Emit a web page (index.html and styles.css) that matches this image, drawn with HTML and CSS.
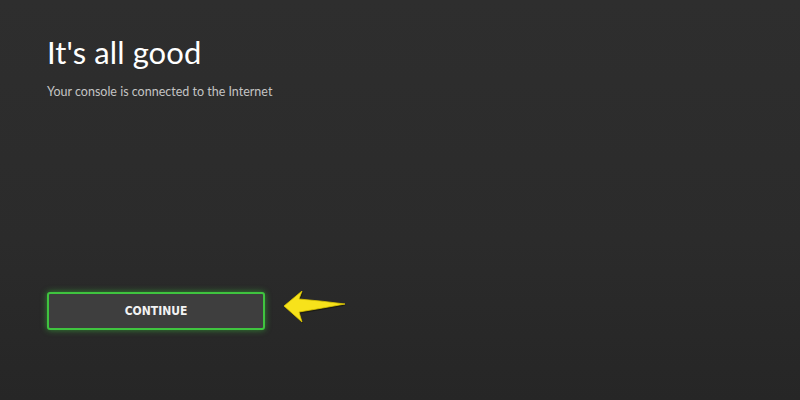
FILE: index.html
```html
<!DOCTYPE html>
<html lang="en">
<head>
    <meta charset="UTF-8">
    <meta name="viewport" content="width=device-width, initial-scale=1.0">
    <title>It's all good</title>
    <link rel="stylesheet" href="styles.css">
</head>
<body>
    <div class="screen">
        <h1 class="title">It's all good</h1>
        <p class="subtitle">Your console is connected to the Internet</p>

        <div class="actions">
            <button class="continue-btn">CONTINUE</button>
            <svg class="pointer" width="64" height="36" viewBox="0 0 64 36">
                <path d="M1 15 L19 0 L16 8 Q40 10 62 13 Q40 17 16 21 L19 31 Z" fill="#15150a" opacity="0.7" transform="translate(1 1.5)"/>
                <path d="M1 15 L19 0 L16 8 Q40 10 62 13 Q40 17 16 21 L19 31 Z" fill="#f7e21b" stroke="#dcc600" stroke-width="0.8" stroke-linejoin="round"/>
            </svg>
        </div>
    </div>
</body>
</html>
```

FILE: styles.css
```css
html, body {
    margin: 0;
    height: 100%;
}
body {
    background: linear-gradient(180deg, #2e2e2e 0%, #2b2b2b 60%, #262626 100%);
    font-family: Lato, "Open Sans", sans-serif;
    color: #fff;
    overflow: hidden;
}
.screen {
    display: flex;
    flex-direction: column;
    padding: 32px 0 0 47px;
}
.title {
    margin: 0;
    font-size: 31px;
    font-weight: 400;
    line-height: 40px;
    letter-spacing: 0.1px;
}
.subtitle {
    margin: 12px 0 0;
    font-size: 12.5px;
    line-height: 16px;
    color: #c4c4c4;
}
.actions {
    display: flex;
    align-items: center;
    gap: 18px;
    margin-top: 192px;
}
.continue-btn {
    width: 218px;
    height: 38px;
    box-sizing: border-box;
    background: #3e3e3e;
    border: 2px solid #3fc43f;
    border-radius: 3px;
    box-shadow: 0 0 6px rgba(60, 200, 60, 0.6);
    color: #f2f2f2;
    font-family: "DejaVu Sans", sans-serif;
    font-stretch: condensed;
    font-weight: 700;
    font-size: 12px;
}
.pointer {
    display: block;
    margin-top: -4px;
}
```
